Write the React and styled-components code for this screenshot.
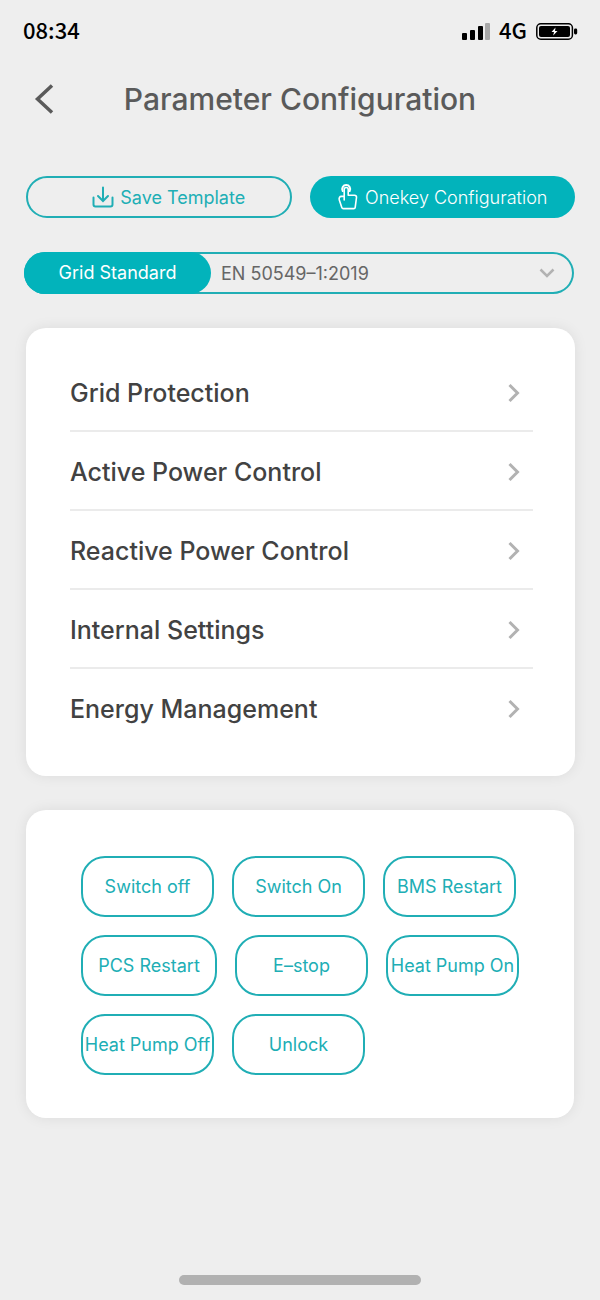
import React from "react";
import styled, { createGlobalStyle } from "styled-components";

const teal = "#02b3bb";
const line = "#20aeb5";

const GlobalStyle = createGlobalStyle`
  *, *::before, *::after { box-sizing: border-box; }
  body {
    margin: 0;
    background: #eeeeee;
    font-family: Inter, "Liberation Sans", sans-serif;
  }
  button, select { font: inherit; margin: 0; }
`;

const Screen = styled.div`
  min-height: 100vh;
  display: flex;
  flex-direction: column;
`;

const StatusBar = styled.div`
  display: flex;
  align-items: center;
  justify-content: space-between;
  height: 62px;
  padding: 0 22px 0 23px;
`;

const StatusText = styled.span`
  padding-bottom: 4px;
  color: #000;
  font-family: "Noto Sans CJK SC", sans-serif;
  font-size: 22px;
  font-weight: 500;
`;

const StatusIcons = styled.div`
  display: flex;
  align-items: center;
  gap: 9px;
`;

const Header = styled.header`
  display: grid;
  grid-template-columns: 54px 1fr 54px;
  align-items: center;
  height: 74px;
  padding: 0 17px;
`;

const BackButton = styled.button`
  display: flex;
  justify-content: center;
  padding: 0;
  border: 0;
  background: none;
  color: #5a5a5a;
  cursor: pointer;
`;

const Title = styled.h1`
  margin: 0;
  color: #5a5a5a;
  font-size: 30px;
  font-weight: 500;
  line-height: 36px;
  text-align: center;
  white-space: nowrap;
`;

const Main = styled.main`
  display: flex;
  flex-direction: column;
  gap: 34px;
  padding: 40px 25px 0 26px;
`;

const Actions = styled.div`
  display: grid;
  grid-template-columns: 1fr 1fr;
  gap: 18px;
`;

const ActionButton = styled.button`
  display: flex;
  align-items: center;
  justify-content: center;
  gap: 6px;
  height: 42px;
  padding: 0 0 0 ${(p) => (p.$filled ? "0" : "20px")};
  border: ${(p) => (p.$filled ? "0" : `2px solid ${line}`)};
  border-radius: 21px;
  background: ${(p) => (p.$filled ? teal : "transparent")};
  color: ${(p) => (p.$filled ? "#fff" : line)};
  white-space: nowrap;
  cursor: pointer;
  && {
    font-size: 18px;
    font-weight: ${(p) => (p.$filled ? 300 : 400)};
  }
`;

const StandardField = styled.div`
  display: grid;
  grid-template-columns: 187px 1fr 46px;
  align-items: center;
  height: 42px;
  margin: 0 1px 0 -2px;
  border-radius: 21px;
  box-shadow: inset 0 0 0 2px ${line};
`;

const StandardLabel = styled.label`
  grid-area: 1 / 1;
  height: 42px;
  border-radius: 21px;
  background: ${teal};
  color: #fff;
  font-size: 18px;
  font-weight: 400;
  line-height: 42px;
  text-align: center;
`;

const StandardSelect = styled.select`
  grid-area: 1 / 2 / 2 / 4;
  width: 100%;
  height: 38px;
  padding: 0 46px 0 10px;
  border: 0;
  border-radius: 19px;
  appearance: none;
  background: transparent;
  color: #666666;
  && { font-size: 18px; }
`;

const SelectArrow = styled.svg`
  grid-area: 1 / 3;
  margin-left: 11px;
  pointer-events: none;
`;

const Card = styled.section`
  border-radius: 20px;
  background: #fff;
  box-shadow: 0 0 14px rgba(0, 0, 0, 0.08);
`;

const MenuCard = styled(Card)`
  padding: 25px 42px 28px 44px;
`;

const MenuRow = styled.button`
  display: flex;
  align-items: center;
  justify-content: space-between;
  width: 100%;
  height: 79px;
  padding: 2px 13px 0 0;
  border: 0;
  border-bottom: 2px solid #ebebeb;
  background: none;
  color: #424242;
  cursor: pointer;
  && {
    font-size: 25px;
    font-weight: 500;
  }
  &:last-child { border-bottom-color: transparent; }
`;

const CommandCard = styled(Card)`
  display: flex;
  flex-wrap: wrap;
  gap: 18px;
  margin-right: 1px;
  padding: 46px 40px 43px 55px;
`;

const CommandButton = styled.button`
  display: flex;
  align-items: center;
  justify-content: center;
  width: ${(p) => (p.$wide ? "136px" : "133px")};
  height: 61px;
  padding: 0;
  border: 2px solid ${line};
  border-radius: 24px;
  background: none;
  color: ${line};
  white-space: nowrap;
  cursor: pointer;
  && {
    font-size: 18px;
    font-weight: 400;
  }
`;

const HomeBar = styled.div`
  width: 242px;
  height: 10px;
  margin: auto auto 15px;
  border-radius: 5px;
  background: #b1b1b1;
`;

const SignalIcon = () => (
  <svg width="28" height="18" viewBox="0 0 28 18" aria-hidden="true">
    <rect x="0" y="11" width="5" height="7" rx="1" />
    <rect x="8" y="8" width="5" height="10" rx="1" />
    <rect x="16" y="4" width="5" height="14" rx="1" />
    <rect x="23" y="1" width="5" height="17" rx="1" fill="#a8a8a8" />
  </svg>
);

const BatteryIcon = () => (
  <svg width="42" height="17" viewBox="0 0 42 17" aria-hidden="true">
    <rect x="0.8" y="0.8" width="35.6" height="15.4" rx="4" fill="none" stroke="#000" strokeWidth="1.5" />
    <rect x="3" y="3" width="31" height="11" rx="2" />
    <rect x="38" y="5.5" width="3.2" height="6" rx="1.4" />
    <path d="M19.5 4.5 15.5 9h2.5l-.8 3.6L21.5 8H19z" fill="#fff" />
  </svg>
);

const SaveIcon = () => (
  <svg width="22" height="22" viewBox="0 0 22 22" fill="none" stroke="currentColor" strokeWidth="2" strokeLinecap="round" aria-hidden="true">
    <path d="M11 1.500v13M6 10l5 5 5-5" />
    <path d="M1.500 11.500v7a2 2 0 0 0 2 2h15a2 2 0 0 0 2-2v-7" />
  </svg>
);

const TouchIcon = () => (
  <svg width="22" height="26" viewBox="0 0 22 26" fill="none" stroke="currentColor" strokeWidth="1.600" strokeLinejoin="round" strokeLinecap="round" aria-hidden="true">
    <path d="M7.200 16V5.500a2 2 0 0 1 4 0v5.700h6.300a2 2 0 0 1 2 2.300l-1.300 9.800a1.500 1.500 0 0 1-1.500 1.300H6.300a1.600 1.600 0 0 1-1.500-1.100L2.300 16c-.6-2.400.4-3.600 2-3.600h2.900" />
    <path d="M5.700 7a4 4 0 1 1 7 0" strokeWidth="2" />
  </svg>
);

const RowArrow = () => (
  <svg width="12" height="20" viewBox="0 0 12 20" fill="none" stroke="#b2b2b2" strokeWidth="3" aria-hidden="true">
    <path d="M1.500 2 9.500 10 1.500 18" />
  </svg>
);

const menuItems = [
  "Grid Protection",
  "Active Power Control",
  "Reactive Power Control",
  "Internal Settings",
  "Energy Management",
];

const commands = [
  { label: "Switch off" },
  { label: "Switch On" },
  { label: "BMS Restart" },
  { label: "PCS Restart", wide: true },
  { label: "E–stop" },
  { label: "Heat Pump On" },
  { label: "Heat Pump Off" },
  { label: "Unlock" },
];

export default function App() {
  return (
    <Screen>
      <GlobalStyle />
      <StatusBar>
        <StatusText>08:34</StatusText>
        <StatusIcons>
          <SignalIcon />
          <StatusText>4G</StatusText>
          <BatteryIcon />
        </StatusIcons>
      </StatusBar>
      <Header>
        <BackButton aria-label="Back">
          <svg width="20" height="30" viewBox="0 0 20 30" fill="none" stroke="currentColor" strokeWidth="3.500" aria-hidden="true">
            <path d="M18 1.500 3.500 15 18 28.500" />
          </svg>
        </BackButton>
        <Title>Parameter Configuration</Title>
      </Header>
      <Main>
        <Actions>
          <ActionButton>
            <SaveIcon />
            Save Template
          </ActionButton>
          <ActionButton $filled>
            <TouchIcon />
            Onekey Configuration
          </ActionButton>
        </Actions>
        <StandardField>
          <StandardLabel htmlFor="standard">Grid Standard</StandardLabel>
          <StandardSelect id="standard" defaultValue="en">
            <option value="en">EN 50549–1:2019</option>
          </StandardSelect>
          <SelectArrow width="16" height="10" viewBox="0 0 16 10" fill="none" stroke="#b2b2b2" strokeWidth="2.500" aria-hidden="true">
            <path d="M1.500 1.500 8 8l6.500-6.500" />
          </SelectArrow>
        </StandardField>
        <MenuCard>
          {menuItems.map((item) => (
            <MenuRow key={item}>
              {item}
              <RowArrow />
            </MenuRow>
          ))}
        </MenuCard>
        <CommandCard>
          {commands.map((command) => (
            <CommandButton key={command.label} $wide={command.wide}>
              {command.label}
            </CommandButton>
          ))}
        </CommandCard>
      </Main>
      <HomeBar />
    </Screen>
  );
}
